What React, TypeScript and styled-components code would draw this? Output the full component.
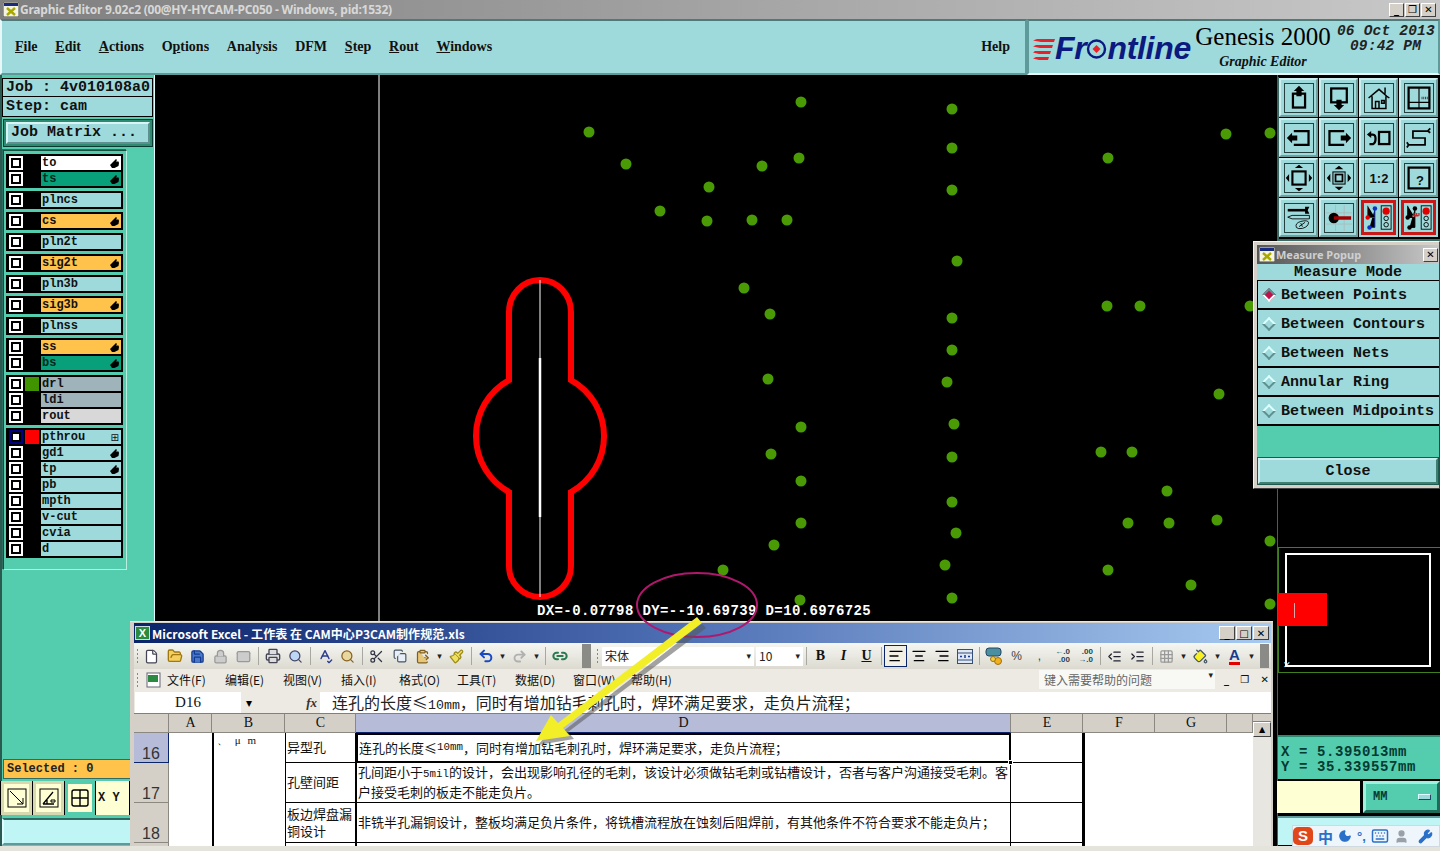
import React from 'react'
import styled, { createGlobalStyle } from 'styled-components'
import {
  AlignCenter, AlignLeft, AlignRight, ClipboardPaste, Copy, File, FolderOpen, Grid3x3, IndentDecrease,
  IndentIncrease, Keyboard, Link2, Lock, Mail, Moon, PaintBucket, Paintbrush, Printer, Redo2, Save,
  Scissors, Search, SpellCheck, Undo2, User, Wrench,
} from 'lucide-react'

const AQUA = '#9edadb'
const TEAL = '#54cdae'
const MONO = `"Liberation Mono", monospace`
const SERIF = `"Liberation Serif", serif`
const CJK = `"Noto Sans CJK SC", sans-serif`

const GlobalStyle = createGlobalStyle`
  html, body { margin: 0; padding: 0; background: #000; overflow: hidden; }
  * { box-sizing: border-box; }
`

const DOTS = [
  [801, 102], [952, 109], [589, 132], [1226, 134], [1270, 133], [952, 148], [799, 158], [1108, 158], [626, 164],
  [762, 166], [709, 187], [952, 190], [660, 211], [707, 221], [752, 220], [787, 220], [957, 261], [744, 288],
  [1107, 306], [1140, 306], [1250, 306], [770, 314], [952, 318], [952, 350], [768, 379], [947, 382], [1219, 394],
  [801, 427], [954, 424], [771, 454], [952, 457], [1101, 452], [1132, 452], [801, 481], [1167, 491], [952, 502],
  [801, 523], [1128, 523], [1169, 523], [1217, 520], [956, 533], [774, 545], [1270, 541], [723, 570], [945, 565],
  [1108, 570], [1191, 585], [952, 598], [800, 600], [1270, 604],
]

type LayerRow = { name: string; tone?: string; hand?: boolean; swatch?: string; active?: boolean; grid?: boolean }

const LAYER_GROUPS: LayerRow[][] = [
  [{ name: 'to', tone: '#fff', hand: true }, { name: 'ts', tone: '#07a07a', hand: true }],
  [{ name: 'plncs' }],
  [{ name: 'cs', tone: '#ffc24a', hand: true }],
  [{ name: 'pln2t' }],
  [{ name: 'sig2t', tone: '#ffc24a', hand: true }],
  [{ name: 'pln3b' }],
  [{ name: 'sig3b', tone: '#ffc24a', hand: true }],
  [{ name: 'plnss' }],
  [{ name: 'ss', tone: '#ffc24a', hand: true }, { name: 'bs', tone: '#07a07a', hand: true }],
  [{ name: 'drl', tone: '#9fb3bb', swatch: '#3f9400' }, { name: 'ldi', tone: '#9fb3bb' }, { name: 'rout', tone: '#d8d8d8' }],
  [
    { name: 'pthrou', swatch: '#ff0000', active: true, grid: true },
    { name: 'gd1', hand: true },
    { name: 'tp', hand: true },
    { name: 'pb' },
    { name: 'mpth' },
    { name: 'v-cut' },
    { name: 'cvia' },
    { name: 'd' },
  ],
]

const MENU = [
  ['', 'F', 'ile'], ['', 'E', 'dit'], ['', 'A', 'ctions'], ['O', 'p', 'tions'], ['Analysis', '', ''],
  ['DFM', '', ''], ['', 'S', 'tep'], ['', 'R', 'out'], ['', 'W', 'indows'],
]

const MEASURE_MODES = ['Between Points', 'Between Contours', 'Between Nets', 'Annular Ring', 'Between Midpoints']

const EXCEL_MENU = ['文件(F)', '编辑(E)', '视图(V)', '插入(I)', '格式(O)', '工具(T)', '数据(D)', '窗口(W)', '帮助(H)']

const AppIcon = () => (
  <svg width="16" height="15" viewBox="0 0 16 15">
    <rect width="16" height="15" fill="#f4f4e0" stroke="#444" />
    <rect x="1" y="1" width="14" height="3" fill="#1a2a80" />
    <path d="M4 6l8 7M12 6l-8 7" stroke="#a8a800" strokeWidth="2.4" />
  </svg>
)

const Hand = () => (
  <svg width="9" height="9" viewBox="0 0 9 9">
    <path d="M0 6l3-3 3-3 1 1-1 1.500h2.500L9 4l-.5 3-4 2H2z" fill="#000" />
  </svg>
)

const ToolIcon = ({ n }: { n: number }) => {
  const s = { fill: 'none', stroke: '#000', strokeWidth: 2.6 }
  const tip = { fill: '#000' }
  switch (n) {
    case 0:
      return <svg viewBox="0 0 30 30"><rect x="8" y="10" width="14" height="16" {...s} /><path d="M15 1l6 6h-3v6h-6V7H9z" {...tip} /></svg>
    case 1:
      return <svg viewBox="0 0 30 30"><rect x="6" y="4" width="18" height="16" {...s} /><path d="M15 29l-6-6h3v-6h6v6h3z" {...tip} /></svg>
    case 2:
      return <svg viewBox="0 0 30 30"><path d="M3 15L15 5l9 8M22 3v7M27 15l-3-2M7 13v14h16V13M11 27v-8h4v8M18 18h3v3h-3z" {...s} strokeWidth={1.7} /></svg>
    case 3:
      return <svg viewBox="0 0 30 30"><rect x="3" y="3" width="24" height="24" {...s} /><path d="M15 3v24M3 20h24" {...s} strokeWidth={1.3} /><path d="M18 15h7" stroke="#333" strokeDasharray="1 1" strokeWidth="3" /></svg>
    case 4:
      return <svg viewBox="0 0 30 30"><path d="M9 7h17v16H9" {...s} /><path d="M1 15l6-6v3h6v6H7v3z" {...tip} /></svg>
    case 5:
      return <svg viewBox="0 0 30 30"><path d="M21 7H4v16h17" {...s} /><path d="M29 15l-6-6v3h-6v6h6v3z" {...tip} /></svg>
    case 6:
      return <svg viewBox="0 0 30 30"><rect x="15" y="8" width="12" height="14" {...s} /><path d="M5 11h3q3 0 3 5t-3 6H4" {...s} /><path d="M1 11l5-4v8z" {...tip} /></svg>
    case 7:
      return <svg viewBox="0 0 30 30"><path d="M25 7H8v8h14v8H3M25 7l3-3M25 7l3 2M3 23l-2-3M3 23l-2 3" {...s} strokeWidth={2} /></svg>
    case 8:
      return <svg viewBox="0 0 34 34"><rect x="9" y="9" width="16" height="16" {...s} /><path d="M17 1l5 4H12zM17 33l5-4H12zM1 17l4-5v10zM33 17l-4-5v10z" {...tip} /></svg>
    case 9:
      return <svg viewBox="0 0 30 30"><rect x="11" y="11" width="8" height="8" {...s} strokeWidth={2} /><rect x="8" y="8" width="14" height="14" {...s} strokeWidth={1.2} /><path d="M15 1l5 4H10zM15 29l5-4H10zM1 15l4-5v10zM29 15l-4-5v10z" {...tip} /></svg>
    case 10:
      return <svg viewBox="0 0 30 30"><ToolLabel x="15" y="21">1:2</ToolLabel></svg>
    case 11:
      return <svg viewBox="0 0 30 30"><rect x="3" y="3" width="24" height="24" {...s} /><ToolLabel x="16" y="23" fontSize="17">?</ToolLabel></svg>
    case 12:
      return <svg viewBox="0 0 30 30"><path d="M2 6h22" {...s} strokeWidth={3} /><path d="M22 2h5l-2 4 2 4h-5z" {...tip} /><path d="M2 14l5-2h20v4H7z" fill="none" stroke="#000" /><path d="M12 26q-2-5 5-7 8-2 9 1 0 5-7 7-5 1-7-1zM15 25l7-5M17 21l2 4" fill="none" stroke="#000" /></svg>
    case 13:
      return <svg viewBox="0 0 30 30"><path d="M11 0v30M21 0v30M0 9h30M0 22h30" stroke="#a9bcbc" /><circle cx="9" cy="15" r="6" fill="#000" /><rect x="9" y="13" width="20" height="4" fill="#a00000" /></svg>
    case 14:
      return <svg viewBox="0 0 30 30"><rect x="18" y="2" width="11" height="26" fill="none" stroke="#000" /><circle cx="23.500" cy="8" r="4" fill="#e00000" /><circle cx="23.500" cy="16" r="2.500" fill="none" stroke="#000" /><circle cx="23.500" cy="23" r="2.500" fill="none" stroke="#000" /><path d="M11 5v21H5M11 15H3" stroke="#1030c0" /><path d="M3 2v13h8" stroke="#e00000" /><circle cx="11" cy="5" r="2.500" fill="#1030c0" /><circle cx="5" cy="26" r="2.500" fill="#1030c0" /><circle cx="3" cy="15" r="2.500" fill="#e00000" /></svg>
    default:
      return <svg viewBox="0 0 30 30"><rect x="18" y="2" width="11" height="26" fill="none" stroke="#000" /><circle cx="23.500" cy="8" r="4" fill="#e00000" /><circle cx="23.500" cy="16" r="2.500" fill="none" stroke="#000" /><circle cx="23.500" cy="23" r="2.500" fill="none" stroke="#000" /><path d="M11 5v21H5M3 2v13h8" stroke="#000" /><path d="M8 13h7M10 10v3M13 10v3M15.500 10v3" stroke="#d02020" strokeWidth="1.500" /><circle cx="11" cy="5" r="2.500" fill="#000" /><circle cx="5" cy="26" r="2.500" fill="#000" /><circle cx="3" cy="15" r="2.500" fill="#000" /></svg>
  }
}

const Arrow = () => <ToolArrow>▾</ToolArrow>

const RuleText = () => (
  <>
    连孔的长度≤<Half>10mm</Half>，同时有增加钻毛刺孔时，焊环满足要求，走负片流程；
  </>
)

const GridRow = ({ head, on, label, children }: { head: string; on?: boolean; label?: string; children?: React.ReactNode }) => (
  <>
    <RowHead $on={on}>{head}</RowHead>
    <Cell />
    <Cell $thick />
    <Cell $grid $left>{label}</Cell>
    {children}
    <Cell $grid />
    <Cell $thick />
    <Cell />
    <Cell />
  </>
)

export default function App() {
  return (
    <Screen>
      <GlobalStyle />
      <TitleBar>
        <AppIcon />
        <TitleText>Graphic Editor 9.02c2 (00@HY-HYCAM-PC050 - Windows, pid:1532)</TitleText>
        <WinButtons>
          <WinButton>_</WinButton>
          <WinButton>❐</WinButton>
          <WinButton>✕</WinButton>
        </WinButtons>
      </TitleBar>

      <TopBar>
        <MenuBar>
          {MENU.map(([before, key, after]) => (
            <MenuItem key={before + key + after}>
              {before}
              {key && <u>{key}</u>}
              {after}
            </MenuItem>
          ))}
          <HelpItem>Help</HelpItem>
        </MenuBar>
        <Brand>
          <Logo>
            <svg width="22" height="24" viewBox="0 0 22 24">
              <path d="M4 2h18l-1 3H8L0 3.500zM3 8h17l-1 3H7L0 9.500zM2 14h16l-1 3H6L0 15.500zM3 20h13l-1 3H6L0 21.500z" fill="#e8202a" />
            </svg>
            <LogoText>
              Fr
              <svg width="21" height="22" viewBox="0 0 21 22">
                <circle cx="10.5" cy="11" r="8.5" fill="none" stroke="#0a1a80" strokeWidth="2.4" />
                <path d="M10.5 7l4 4-4 4-4-4z" fill="#e8202a" />
              </svg>
              ntline
            </LogoText>
          </Logo>
          <BrandTitles>
            <Genesis>Genesis 2000</Genesis>
            <BrandSub>Graphic Editor</BrandSub>
          </BrandTitles>
          <DateBlock>
            <div>06 Oct 2013</div>
            <DateTime>09:42 PM</DateTime>
          </DateBlock>
        </Brand>
      </TopBar>

      <Main>
        <LeftPanel>
          <JobRow>Job : 4v010108a0</JobRow>
          <StepRow>Step: cam</StepRow>
          <MatrixFrame>
            <MatrixButton>Job Matrix ...</MatrixButton>
          </MatrixFrame>
          <LayerPanel>
            {LAYER_GROUPS.map((group) => (
              <LayerGroup key={group[0].name}>
                {group.map((row) => (
                  <LayerItem key={row.name}>
                    <LayerCheck $active={row.active} />
                    <LayerSwatch $color={row.swatch} />
                    <LayerLabel $tone={row.tone ?? AQUA} $dark={row.tone === '#07a07a'}>
                      {row.name}
                      {row.hand && <LabelMark><Hand /></LabelMark>}
                      {row.grid && <LabelMark>⊞</LabelMark>}
                    </LayerLabel>
                  </LayerItem>
                ))}
              </LayerGroup>
            ))}
          </LayerPanel>
          <SelectedBar>Selected : 0</SelectedBar>
          <SnapRow>
            <SnapButton>
              <svg viewBox="0 0 20 20"><rect x="1" y="1" width="18" height="18" fill="none" stroke="#000" /><path d="M3 3l13 13M16 10v6h-6" fill="none" stroke="#000" /></svg>
            </SnapButton>
            <SnapButton>
              <svg viewBox="0 0 20 20"><rect x="1" y="1" width="18" height="18" fill="none" stroke="#000" /><path d="M4 16L14 4M4 16h11M8 16v-4" fill="none" stroke="#000" strokeWidth="1.3" /><path d="M12 12h4v2h-4z" fill="none" stroke="#000" /></svg>
            </SnapButton>
            <SnapButton $on>
              <svg viewBox="0 0 20 20"><rect x="2" y="2" width="16" height="16" rx="2" fill="none" stroke="#000" strokeWidth="1.4" /><path d="M10 2v16M2 10h16" stroke="#000" strokeWidth="1.4" /></svg>
            </SnapButton>
            <SnapLabel>X Y</SnapLabel>
          </SnapRow>
          <CommandInput />
        </LeftPanel>

        <Canvas>
          <CanvasArt viewBox="155 75 1122 771">
            <line x1="379" y1="75" x2="379" y2="621" stroke="#fff" />
            {DOTS.map(([cx, cy]) => (
              <circle key={`${cx}-${cy}`} cx={cx} cy={cy} r="5.5" fill="#4a9a06" />
            ))}
            <path
              d="M509 312A31 32 0 0 1 571 312V380A64 64 0 0 1 571 492V566A31 31 0 0 1 509 566V492A64 64 0 0 1 509 380Z"
              fill="none"
              stroke="#ff0000"
              strokeWidth="6"
            />
            <line x1="540" y1="280" x2="540" y2="597" stroke="#fff" />
            <line x1="540" y1="358" x2="540" y2="517" stroke="#fff" strokeWidth="2.5" />
          </CanvasArt>
          <MeasureText>DX=-0.07798 DY=--10.69739 D=10.6976725</MeasureText>
        </Canvas>

        <RightPanel>
          <ToolGrid>
            {Array.from({ length: 16 }, (_, i) => (
              <ToolButton key={i} $alert={i >= 14}>
                <ToolFrame $wide={i === 8} $alert={i >= 14}>
                  <ToolIcon n={i} />
                </ToolFrame>
              </ToolButton>
            ))}
          </ToolGrid>
          <OverviewArea>
            <OverviewFrame>
              <OverviewBoard />
              <OverviewStock>
                <OverviewMark />
              </OverviewStock>
              <OverviewOrigin>✕</OverviewOrigin>
            </OverviewFrame>
          </OverviewArea>
          <CoordBox>
            <div>X = 5.395013mm</div>
            <div>Y = 35.339557mm</div>
          </CoordBox>
          <UnitRow>
            <UnitField />
            <UnitButton>
              MM
              <UnitKnob />
            </UnitButton>
          </UnitRow>
          <StatusStrip />
        </RightPanel>
      </Main>
      <BottomEdge />

      <MeasurePopup>
        <PopupTitle>
          <AppIcon />
          <PopupTitleText>Measure Popup</PopupTitleText>
          <PopupClose>✕</PopupClose>
        </PopupTitle>
        <PopupHeading>Measure Mode</PopupHeading>
        <ModeList>
          {MEASURE_MODES.map((mode, i) => (
            <ModeRow key={mode}>
              <ModeDiamond $on={i === 0} />
              {mode}
            </ModeRow>
          ))}
        </ModeList>
        <PopupFooter>
          <CloseButton>Close</CloseButton>
        </PopupFooter>
      </MeasurePopup>

      <ExcelWindow>
        <ExcelTitle>
          <ExcelLogo>X</ExcelLogo>
          <span>Microsoft Excel - 工作表 在 CAM中心P3CAM制作规范.xls</span>
          <ExcelControls>
            <ExcelControl>_</ExcelControl>
            <ExcelControl>□</ExcelControl>
            <ExcelControl>✕</ExcelControl>
          </ExcelControls>
        </ExcelTitle>

        <ExcelToolbar>
          <Grip />
          <Tool><File size={15} color="#445" fill="#fff" /></Tool>
          <Tool><FolderOpen size={16} color="#a07810" fill="#f4cf60" /></Tool>
          <Tool><Save size={15} color="#123a90" fill="#4a78c8" /></Tool>
          <Tool><Lock size={15} color="#999" fill="#ccc" /></Tool>
          <Tool><Mail size={15} color="#999" fill="#ccc" /></Tool>
          <ToolSep />
          <Tool><Printer size={16} color="#445" fill="#ddd" /></Tool>
          <Tool><Search size={15} color="#446" fill="#bcd8f4" /></Tool>
          <ToolSep />
          <Tool><SpellCheck size={16} color="#2a3a90" /></Tool>
          <Tool><Search size={15} color="#886020" fill="#e8d8a0" /></Tool>
          <ToolSep />
          <Tool><Scissors size={15} color="#334" /></Tool>
          <Tool><Copy size={14} color="#456" fill="#e8eef8" /></Tool>
          <Tool><ClipboardPaste size={15} color="#806020" fill="#e8c878" /></Tool>
          <Arrow />
          <Tool><Paintbrush size={15} color="#9a8a20" fill="#f0e060" /></Tool>
          <ToolSep />
          <Tool><Undo2 size={16} color="#1a4ac0" strokeWidth={3} /></Tool>
          <Arrow />
          <Tool><Redo2 size={15} color="#b0b0b0" strokeWidth={3} /></Tool>
          <Arrow />
          <ToolSep />
          <Tool><Link2 size={16} color="#2a7a50" strokeWidth={3} /></Tool>
          <DoubleGrip />
          <Grip />
          <FontBox $width={152}>宋体<BoxArrow>▾</BoxArrow></FontBox>
          <FontBox $width={47}>10<BoxArrow>▾</BoxArrow></FontBox>
          <ToolSep />
          <FormatTool>B</FormatTool>
          <FormatTool $italic>I</FormatTool>
          <FormatTool $underline>U</FormatTool>
          <ToolSep />
          <Tool $active><AlignLeft size={16} color="#000" /></Tool>
          <Tool><AlignCenter size={16} color="#000" /></Tool>
          <Tool><AlignRight size={16} color="#000" /></Tool>
          <Tool>
            <svg width="16" height="15" viewBox="0 0 16 15">
              <rect x=".5" y=".5" width="15" height="14" fill="#dfe8f4" stroke="#34507a" />
              <path d="M.5 4h15M.5 11h15" stroke="#34507a" />
              <path d="M3 7.500h2M11 7.500h2M8 6v3" stroke="#1a3a90" strokeWidth="1.5" />
            </svg>
          </Tool>
          <ToolSep />
          <Tool>
            <svg width="18" height="18" viewBox="0 0 18 18">
              <rect x="1" y="1" width="15" height="8" rx="3" fill="#4a90a0" stroke="#246" />
              <circle cx="13" cy="14" r="3.500" fill="#f0b020" stroke="#a07010" />
              <circle cx="8" cy="12" r="2.500" fill="#f0d040" stroke="#a07010" />
            </svg>
          </Tool>
          <Tool><FormatGlyph>%</FormatGlyph></Tool>
          <Tool><FormatGlyph>,</FormatGlyph></Tool>
          <Tool><DecimalGlyph><span>←.0</span><span>.00</span></DecimalGlyph></Tool>
          <Tool><DecimalGlyph><span>.00</span><span>→.0</span></DecimalGlyph></Tool>
          <ToolSep />
          <Tool><IndentDecrease size={15} color="#223" /></Tool>
          <Tool><IndentIncrease size={15} color="#223" /></Tool>
          <ToolSep />
          <Tool><Grid3x3 size={15} color="#999" /></Tool>
          <Arrow />
          <Tool><PaintBucket size={15} color="#456" fill="#f8f020" /></Tool>
          <Arrow />
          <Tool><FontColorGlyph>A</FontColorGlyph></Tool>
          <Arrow />
          <TailGrip />
        </ExcelToolbar>

        <ExcelMenu>
          <Grip />
          <ExcelMenuLogo>
            <svg width="16" height="16" viewBox="0 0 16 16">
              <rect x="1" y="1" width="13" height="14" fill="#fff" stroke="#667" />
              <rect x="2" y="3" width="10" height="7" fill="#2a8a40" />
            </svg>
          </ExcelMenuLogo>
          {EXCEL_MENU.map((item) => (
            <ExcelMenuItem key={item}>{item}</ExcelMenuItem>
          ))}
          <HelpBox>键入需要帮助的问题<BoxArrow>▾</BoxArrow></HelpBox>
          <MenuControls>
            <span>_</span>
            <span>❐</span>
            <span>✕</span>
          </MenuControls>
        </ExcelMenu>

        <FormulaBar>
          <NameBox>D16</NameBox>
          <NameArrow>▾</NameArrow>
          <FxMark>fx</FxMark>
          <FormulaText><RuleText /></FormulaText>
        </FormulaBar>

        <SheetArea>
          <Sheet>
            <ColHead />
            {['A', 'B', 'C', 'D', 'E', 'F', 'G', ''].map((c) => (
              <ColHead key={c || 'blank'} $on={c === 'D'}>{c}</ColHead>
            ))}

            <RowHead $on>16</RowHead>
            <Cell />
            <Cell $thick>
              <SmallNote>、 μ m</SmallNote>
            </Cell>
            <Cell $grid $left>异型孔</Cell>
            <SelectedCell>
              <RuleText />
              <FillHandle />
            </SelectedCell>
            <Cell $grid />
            <Cell $thick />
            <Cell />
            <Cell />

            <GridRow head="17" label="孔壁间距">
              <Cell $grid $left>
                <CellLines>
                  <div>孔间距小于<Half>5mil</Half>的设计，会出现影响孔径的毛刺，该设计必须做钻毛刺或钻槽设计，否者与客户沟通接受毛刺。客</div>
                  <div>户接受毛刺的板走不能走负片。</div>
                </CellLines>
              </Cell>
            </GridRow>

            <GridRow head="18" label="板边焊盘漏铜设计">
              <Cell $grid $left>
                非铣半孔漏铜设计，整板均满足负片条件，将铣槽流程放在蚀刻后阻焊前，有其他条件不符合要求不能走负片；
              </Cell>
            </GridRow>

            <GridRow head="">
              <Cell $grid $left />
            </GridRow>
          </Sheet>
          <ScrollBar>
            <ScrollSplit />
            <ScrollUp>▲</ScrollUp>
          </ScrollBar>
        </SheetArea>
      </ExcelWindow>

      <Annotation viewBox="0 0 1440 851">
        <ellipse cx="697" cy="605" rx="60" ry="32" fill="none" stroke="#b0186e" strokeWidth="2" />
        <path d="M700 622L560 730L554 722L536 743L572 737L566 730L704 626Z" fill="#555" opacity=".55" transform="translate(2 2)" />
        <path d="M697 617L558 723L551 715L536 741L570 736L563 728L702 623Z" fill="#f2ee28" />
      </Annotation>

      <Tray>
        <TraySogou>S</TraySogou>
        <TrayZh>中</TrayZh>
        <Moon size={14} color="#2a6fc8" fill="#2a6fc8" />
        <TrayPunct>°,</TrayPunct>
        <Keyboard size={18} color="#2a6fc8" />
        <User size={15} color="#9aa0a8" fill="#9aa0a8" />
        <TrayWrench><Wrench size={15} color="#2a6fc8" fill="#2a6fc8" /></TrayWrench>
      </Tray>
    </Screen>
  )
}

const Screen = styled.div`
  position: relative;
  width: 1440px;
  height: 851px;
  overflow: hidden;
  display: flex;
  flex-direction: column;
  background: #000;
`

const TitleBar = styled.div`
  height: 19px;
  flex: none;
  display: flex;
  align-items: center;
  padding-left: 3px;
  background: linear-gradient(90deg, #7f7f7f, #c8c8c8);
`

const TitleText = styled.span`
  margin-left: 1px;
  font: bold 12px "Noto Sans", sans-serif;
  letter-spacing: -0.22px;
  color: #d8d8d8;
  white-space: nowrap;
`

const WinButtons = styled.div`
  margin-left: auto;
  margin-right: 4px;
  display: flex;
  gap: 1px;
`

const WinButton = styled.div`
  width: 15px;
  height: 14px;
  display: flex;
  align-items: center;
  justify-content: center;
  background: #d4d0c8;
  border: 1px solid;
  border-color: #fff #404040 #404040 #fff;
  font: bold 10px "DejaVu Sans", sans-serif;
  color: #000;
`

const TopBar = styled.div`
  height: 56px;
  flex: none;
  display: flex;
  background: #f0f8f8;
`

const MenuBar = styled.div`
  width: 1027px;
  display: flex;
  align-items: center;
  gap: 17.75px;
  padding: 0 15px 0 13px;
  background: ${AQUA};
  border: 2px solid;
  border-color: #4f7a7a #5f9a9a #5f9a9a #e8f8f8;
`

const MenuItem = styled.span`
  font: bold 14px ${SERIF};
  color: #111;
`

const HelpItem = styled(MenuItem)`
  margin-left: auto;
`

const Brand = styled.div`
  flex: 1;
  display: flex;
  align-items: flex-start;
  padding: 2px 0 0 4px;
  background: ${AQUA};
  border: 2px solid;
  border-color: #4f7a7a #5f9a9a #e8f8f8 #5f9a9a;
`

const Logo = styled.div`
  display: flex;
  align-items: center;
  margin-top: 7px;
`

const LogoText = styled.div`
  display: flex;
  align-items: center;
  font: italic bold 32px "Liberation Sans", sans-serif;
  letter-spacing: -0.3px;
  color: #0a1a80;
`

const BrandTitles = styled.div`
  margin-left: 3px;
  width: 138px;
  display: flex;
  flex-direction: column;
  align-items: center;
`

const Genesis = styled.div`
  font: 25px/28px ${SERIF};
  color: #000;
  white-space: nowrap;
`

const BrandSub = styled.div`
  margin-top: 3px;
  font: italic bold 14px ${SERIF};
  color: #111;
`

const DateBlock = styled.div`
  margin-left: 5px;
  padding-top: 1px;
  font: italic bold 14.5px/15px ${MONO};
  letter-spacing: 0.2px;
  color: #222;
  white-space: nowrap;
`

const DateTime = styled.div`
  margin-left: 13px;
`

const Main = styled.div`
  flex: 1;
  min-height: 0;
  display: flex;
`

const LeftPanel = styled.div`
  width: 155px;
  flex: none;
  display: flex;
  flex-direction: column;
  padding-top: 3px;
  background: linear-gradient(90deg, #2a5a50 2px, ${TEAL} 2px);
  border-right: 1px solid #dff;
`

const JobRow = styled.div`
  height: 19px;
  margin: 0 1px 0 2px;
  padding-left: 3px;
  background: ${AQUA};
  border: 1px solid #000;
  font: bold 15px/18px ${MONO};
  color: #111;
  white-space: nowrap;
`

const StepRow = styled(JobRow)`
  height: 20px;
  border-top: 0;
  line-height: 20px;
`

const MatrixFrame = styled.div`
  margin: 2px 1px 0 3px;
  padding: 2px;
  height: 28px;
  background: #2f8a72;
  border: 1px solid #0a3a30;
`

const MatrixButton = styled.div`
  height: 22px;
  padding-left: 3px;
  background: ${AQUA};
  border: 2px solid;
  border-color: #d8f4f4 #5f8f8f #5f8f8f #d8f4f4;
  font: bold 15px/18px ${MONO};
  color: #111;
`

const LayerPanel = styled.div`
  width: 124px;
  margin: 3px 0 0 3px;
  padding: 3px 3px 11px 2px;
  display: flex;
  flex-direction: column;
  gap: 3px;
  background: ${TEAL};
  border: 1px solid;
  border-color: #16503f #b8efe0 #b8efe0 #16503f;
  box-shadow: -1px -1px 0 #2f6b60;
`

const LayerGroup = styled.div`
  padding: 1px 2px 1px 2px;
  background: #000;
`

const LayerItem = styled.div`
  height: 16px;
  display: flex;
  align-items: center;
`

// hollow square: white centre, black ring, outer ring (navy on the active layer)
const LayerCheck = styled.div<{ $active?: boolean }>`
  width: 6px;
  height: 6px;
  flex: none;
  margin: 0 4px 0 5px;
  background: #fff;
  box-shadow: 0 0 0 2px #000, 0 0 0 4px ${({ $active }) => ($active ? '#000080' : '#fff')};
`

const LayerSwatch = styled.div<{ $color?: string }>`
  width: 14px;
  height: 14px;
  flex: none;
  margin: 0 2px;
  background: ${({ $color }) => $color ?? '#000'};
`

const LayerLabel = styled.div<{ $tone: string; $dark?: boolean }>`
  flex: 1;
  height: 14px;
  padding-left: 1px;
  display: flex;
  align-items: center;
  justify-content: space-between;
  background: ${({ $tone }) => $tone};
  font: bold 12px/14px ${MONO};
  color: ${({ $dark }) => ($dark ? '#02281e' : '#111')};
`

const LabelMark = styled.span`
  display: flex;
  align-items: center;
  padding-right: 2px;
  font: 10px "DejaVu Sans", sans-serif;
`

const SelectedBar = styled.div`
  margin: auto 0 0 3px;
  height: 20px;
  padding-left: 3px;
  background: #ffc24a;
  border: 1px solid #2f6b60;
  font: bold 12px/18px ${MONO};
  color: #222;
`

const SnapRow = styled.div`
  height: 34px;
  margin-top: 2px;
  padding: 0 25px 0 1px;
  display: flex;
  align-items: stretch;
  gap: 1px;
  background: #000;
`

const SnapButton = styled.div<{ $on?: boolean }>`
  width: ${({ $on }) => ($on ? '30px' : '31px')};
  flex: none;
  display: flex;
  align-items: center;
  justify-content: center;
  background: #ffffd4;
  border: 3px solid ${({ $on }) => ($on ? TEAL : '#d8d8b0')};

  svg {
    width: 20px;
    height: 20px;
  }
`

const SnapLabel = styled.div`
  flex: 1;
  padding-left: 2px;
  background: #ffffd4;
  font: bold 12px/34px ${MONO};
  color: #111;
  white-space: nowrap;
`

const CommandInput = styled.div`
  height: 27px;
  margin: 3px 0 1px 2px;
  background: #bff5f5;
  border: 2px solid;
  border-color: #2f6b60 #dff #5f9a9a #dff;
`

const Canvas = styled.div`
  position: relative;
  flex: 1;
  background: #000;
`

const CanvasArt = styled.svg`
  display: block;
  width: 100%;
  height: 100%;
`

const MeasureText = styled.div`
  position: absolute;
  left: 382px;
  top: 528px;
  font: bold 14px/16px ${MONO};
  letter-spacing: 0.39px;
  color: #fff;
  white-space: nowrap;
`

const RightPanel = styled.div`
  width: 163px;
  flex: none;
  display: flex;
  flex-direction: column;
  background: #000;
  border-left: 1px solid #2f6b60;
`

const ToolGrid = styled.div`
  margin-top: 2px;
  padding: 1px 0;
  display: grid;
  grid-template-columns: repeat(4, 40px);
  grid-auto-rows: 40px;
  background: #000;
  border: 1px solid #3a6a64;
  border-width: 0 0 3px 1px;
`

const ToolButton = styled.div<{ $alert?: boolean }>`
  margin: 0 1px 1px 0;
  display: flex;
  align-items: center;
  justify-content: center;
  background: ${AQUA};
  border: 2px solid;
  border-color: ${({ $alert }) => ($alert ? AQUA : '#cdeeee #6f9f9f #6f9f9f #cdeeee')};
`

const ToolFrame = styled.div<{ $wide?: boolean; $alert?: boolean }>`
  width: ${({ $alert }) => ($alert ? '35px' : '30px')};
  height: ${({ $alert }) => ($alert ? '35px' : '30px')};
  padding: ${({ $wide }) => ($wide ? '0' : '1px')};
  background: ${AQUA};
  border: ${({ $alert }) => ($alert ? '3px solid #c81818' : '1px solid #24403f')};

  svg {
    display: block;
    width: 100%;
    height: 100%;
  }
`

const ToolLabel = styled.text`
  font: bold 15px "Liberation Sans", sans-serif;
  text-anchor: middle;
  fill: #111;
`

const OverviewArea = styled.div`
  flex: 1;
  position: relative;
  min-height: 0;
`

const OverviewFrame = styled.div`
  position: absolute;
  left: 0;
  right: 0;
  top: 305px;
  height: 126px;
  border: 1px solid #3f7f1f;
  border-right: 0;
`

const OverviewBoard = styled.div`
  position: absolute;
  left: 6px;
  top: 5px;
  width: 146px;
  height: 114px;
  border: 2px solid #fff;
`

const OverviewStock = styled.div`
  position: absolute;
  left: -1px;
  top: 45px;
  width: 49px;
  height: 33px;
  background: #ff0000;
`

const OverviewMark = styled.div`
  position: absolute;
  left: 16px;
  top: 10px;
  width: 1px;
  height: 15px;
  background: #d8a8a8;
`

const OverviewOrigin = styled.span`
  position: absolute;
  left: 4px;
  top: 112px;
  color: #fff;
  font: 9px "DejaVu Sans", sans-serif;
`

const CoordBox = styled.div`
  height: 44px;
  padding: 8px 0 0 3px;
  background: ${TEAL};
  border-top: 2px solid #2f8a72;
  font: bold 14px/15px ${MONO};
  letter-spacing: 0.6px;
  color: #043a30;
  white-space: nowrap;
`

const UnitRow = styled.div`
  height: 32px;
  margin: 2px 0 0 -1px;
  display: flex;
  gap: 3px;
`

const UnitField = styled.div`
  width: 83px;
  background: #ffffd4;
`

const UnitButton = styled.div`
  flex: 1;
  display: flex;
  align-items: center;
  justify-content: space-between;
  padding: 0 6px 0 7px;
  background: ${TEAL};
  border: 3px solid;
  border-color: #9ff0dc #1f6a58 #1f6a58 #9ff0dc;
  font: bold 12px ${MONO};
  color: #043a30;
`

const UnitKnob = styled.div`
  width: 13px;
  height: 6px;
  background: ${AQUA};
  border: 1px solid;
  border-color: #dff #246 #246 #dff;
`

const StatusStrip = styled.div`
  height: 29px;
  margin-top: 3px;
  margin-bottom: 1px;
  background: #bff5f5;
  border-top: 2px solid #5f9a9a;
`

const BottomEdge = styled.div`
  height: 5px;
  flex: none;
  background: #e4e4dc;
`

const MeasurePopup = styled.div`
  position: absolute;
  left: 1253px;
  top: 241px;
  width: 187px;
  height: 248px;
  padding: 3px 0 3px 3px;
  display: flex;
  flex-direction: column;
  background: #d4d0c8;
  border: 1px solid;
  border-color: #f4f4f0 #404040 #404040 #f4f4f0;
`

const PopupTitle = styled.div`
  height: 19px;
  flex: none;
  display: flex;
  align-items: center;
  padding-left: 2px;
  background: linear-gradient(90deg, #555, #c8c8c8);
`

const PopupTitleText = styled.span`
  margin-left: 1px;
  font: bold 11px "Noto Sans", sans-serif;
  color: #cfcfcf;
`

const PopupClose = styled(WinButton)`
  margin-left: auto;
  margin-right: 1px;
`

const PopupHeading = styled.div`
  height: 17px;
  padding-top: 1px;
  background: ${AQUA};
  text-align: center;
  font: bold 15px/16px ${MONO};
  color: #111;
  border-bottom: 1px solid #000;
`

const ModeList = styled.div`
  display: flex;
  flex-direction: column;
  background: #000;
`

const ModeRow = styled.div`
  height: 27px;
  margin: 0 0 2px 1px;
  display: flex;
  align-items: center;
  gap: 7px;
  padding: 2px 0 0 6px;
  background: ${AQUA};
  font: bold 15px ${MONO};
  color: #111;
  white-space: nowrap;
`

const ModeDiamond = styled.span<{ $on?: boolean }>`
  width: 10px;
  height: 10px;
  flex: none;
  margin-top: -2px;
  transform: rotate(45deg);
  background: ${({ $on }) => ($on ? '#c0104a' : AQUA)};
  border: 2px solid;
  border-color: ${({ $on }) => ($on ? '#5f8f8f #fff #fff #5f8f8f' : '#dff #5f8f8f #5f8f8f #dff')};
`

const PopupFooter = styled.div`
  flex: 1;
  display: flex;
  align-items: flex-end;
  background: ${TEAL};
`

const CloseButton = styled.div`
  width: 100%;
  height: 28px;
  background: ${AQUA};
  border: 3px solid;
  border-color: #cdeeee #3f7f72 #3f7f72 #cdeeee;
  outline: 1px solid #1f5a50;
  outline-offset: -1px;
  text-align: center;
  font: bold 15px/24px ${MONO};
  color: #111;
`

const ExcelWindow = styled.div`
  position: absolute;
  left: 130px;
  top: 621px;
  width: 1143px;
  height: 225px;
  overflow: hidden;
  display: flex;
  flex-direction: column;
  padding: 1px 2px 0 4px;
  background: #d4d0c8;
  border-top: 1px solid #e8e8e0;
`

const ExcelTitle = styled.div`
  height: 20px;
  flex: none;
  display: flex;
  align-items: center;
  gap: 2px;
  padding-left: 1px;
  background: linear-gradient(90deg, #0a246a 0%, #4a6ab0 45%, #a6caf0 100%);
  font: bold 12px ${CJK};
  letter-spacing: 0.05px;
  color: #fff;
  white-space: nowrap;
`

const ExcelLogo = styled.span`
  width: 15px;
  height: 14px;
  background: #2a8a40;
  border: 1px solid #cdd;
  text-align: center;
  font: bold 11px/12px "Liberation Sans", sans-serif;
  color: #fff;
`

const ExcelControls = styled.div`
  margin-left: auto;
  margin-right: 2px;
  display: flex;
  gap: 1px;
`

const ExcelControl = styled.div`
  width: 16px;
  height: 14px;
  display: flex;
  align-items: center;
  justify-content: center;
  background: #d4d0c8;
  border: 1px solid;
  border-color: #fff #404040 #404040 #fff;
  font: bold 10px "DejaVu Sans", sans-serif;
  color: #000;
`

const ExcelToolbar = styled.div`
  height: 26px;
  flex: none;
  display: flex;
  align-items: center;
  padding-left: 2px;
  background: linear-gradient(180deg, #f6f6f2, #dcdad0);
`

const Grip = styled.span`
  width: 4px;
  height: 16px;
  flex: none;
  background-image: radial-gradient(#888 1px, transparent 1px);
  background-size: 3px 4px;
`

const Tool = styled.span<{ $active?: boolean }>`
  width: 23px;
  height: 22px;
  flex: none;
  display: flex;
  align-items: center;
  justify-content: center;
  background: ${({ $active }) => ($active ? '#f2f0e4' : 'transparent')};
  border: 1px solid ${({ $active }) => ($active ? '#0a246a' : 'transparent')};
`

const ToolArrow = styled.span`
  width: 11px;
  flex: none;
  text-align: center;
  font: 9px "DejaVu Sans", sans-serif;
  color: #222;
`

const ToolSep = styled.span`
  width: 1px;
  height: 18px;
  flex: none;
  margin: 0 2.5px;
  background: #a8a8a0;
`

const DoubleGrip = styled.span`
  width: 9px;
  height: 24px;
  flex: none;
  margin: 0 5px 0 11px;
  background: #8a8a86;
`

const TailGrip = styled(DoubleGrip)`
  margin: 0 0 0 3px;
`

const FontBox = styled.span<{ $width: number }>`
  width: ${({ $width }) => $width}px;
  height: 19px;
  flex: none;
  margin-left: 2px;
  display: flex;
  align-items: center;
  justify-content: space-between;
  padding: 0 3px;
  background: #fff;
  font: 12px/16px ${CJK};
  color: #222;
`

const BoxArrow = styled.span`
  font: 9px "DejaVu Sans", sans-serif;
  color: #222;
`

const FormatTool = styled.span<{ $italic?: boolean; $underline?: boolean }>`
  width: 23px;
  flex: none;
  text-align: center;
  font: bold 14px ${SERIF};
  font-style: ${({ $italic }) => ($italic ? 'italic' : 'normal')};
  text-decoration: ${({ $underline }) => ($underline ? 'underline' : 'none')};
  color: #111;
`

const FormatGlyph = styled.span`
  font: 12px "Liberation Sans", sans-serif;
  color: #444;
`

const DecimalGlyph = styled.span`
  display: flex;
  flex-direction: column;
  align-items: flex-end;
  font: bold 8px/8px "Liberation Sans", sans-serif;
  color: #245;
`

const FontColorGlyph = styled.span`
  font: bold 15px/14px "Liberation Sans", sans-serif;
  color: #1a3a90;
  border-bottom: 3px solid #e00000;
`

const ExcelMenu = styled.div`
  height: 23px;
  flex: none;
  display: flex;
  align-items: center;
  padding: 0 0 2px 2px;
  background: #eceae2;
`

const ExcelMenuLogo = styled.span`
  display: flex;
  width: 27px;
  justify-content: center;
`

const ExcelMenuItem = styled.span`
  width: 58px;
  flex: none;
  font: 12px ${CJK};
  color: #111;
  white-space: nowrap;
`

const HelpBox = styled.span`
  width: 176px;
  margin-left: auto;
  padding: 0 2px 0 5px;
  display: flex;
  justify-content: space-between;
  background: #f8f8f4;
  font: 12px/19px ${CJK};
  color: #666;
`

const MenuControls = styled.span`
  width: 56px;
  padding: 0 2px 0 9px;
  display: flex;
  justify-content: space-between;
  font: bold 10px "DejaVu Sans", sans-serif;
  color: #111;
`

const FormulaBar = styled.div`
  height: 21px;
  flex: none;
  display: flex;
  align-items: center;
  background: #eceae2;
`

const NameBox = styled.span`
  width: 106px;
  height: 100%;
  margin-left: 1px;
  background: #fff;
  text-align: center;
  font: 15px/21px ${SERIF};
  color: #111;
`

const NameArrow = styled.span`
  width: 16px;
  text-align: center;
  font: 12px "DejaVu Sans", sans-serif;
`

const FxMark = styled.span`
  width: 63px;
  padding-right: 3px;
  text-align: right;
  font: italic bold 13px ${SERIF};
  color: #333;
`

const FormulaText = styled.span`
  flex: 1;
  height: 100%;
  padding-left: 12px;
  background: #fff;
  font: 16px/21px ${CJK};
  color: #222;
  white-space: nowrap;
`

const Half = styled.span`
  font-family: ${MONO};
  font-size: 0.83em;
`

const SheetArea = styled.div`
  flex: 1;
  min-height: 0;
  display: flex;
  border-top: 1px solid #808080;
`

const Sheet = styled.div`
  flex: 1;
  display: grid;
  grid-template-columns: 35px 43px 73px 71px 655px 72px 72px 72px 1fr;
  grid-template-rows: 19px 30px 40px 40px 20px;
  background: #fff;
`

const ColHead = styled.div<{ $on?: boolean }>`
  padding-left: 1px;
  background: ${({ $on }) => ($on ? '#b6bcd8' : '#d4d0c8')};
  border-right: 1px solid #8a8880;
  border-bottom: 1px solid ${({ $on }) => ($on ? '#0a246a' : '#8a8880')};
  text-align: center;
  font: 14px/18px ${SERIF};
  color: #111;
`

const RowHead = styled.div<{ $on?: boolean }>`
  display: flex;
  align-items: flex-end;
  justify-content: center;
  background: ${({ $on }) => ($on ? '#b6bcd8' : '#d4d0c8')};
  border-right: 1px solid ${({ $on }) => ($on ? '#0a246a' : '#8a8880')};
  border-bottom: 1px solid ${({ $on }) => ($on ? '#0a246a' : '#8a8880')};
  font: 16px/16px "Liberation Sans", sans-serif;
  color: #333;
`

const Cell = styled.div<{ $grid?: boolean; $left?: boolean; $thick?: boolean }>`
  display: flex;
  align-items: center;
  padding: 0 0 2px 1px;
  border-bottom: ${({ $grid }) => ($grid ? '1px solid #000' : '0')};
  border-left: ${({ $left, $thick }) => ($thick ? '2px solid #000' : $left ? '1px solid #000' : '0')};
  border-right: ${({ $grid }) => ($grid ? '1px solid #000' : '0')};
  font: 13px/17px ${CJK};
  color: #111;
`

const SelectedCell = styled(Cell)`
  position: relative;
  border: 2px solid #000;
  white-space: nowrap;
`

const CellLines = styled.div`
  white-space: nowrap;
`

const FillHandle = styled.span`
  position: absolute;
  right: -4px;
  bottom: -4px;
  width: 5px;
  height: 5px;
  background: #000;
  border: 1px solid #fff;
`

const SmallNote = styled.span`
  align-self: flex-start;
  margin-left: 2px;
  font: 11px/15px "Liberation Serif", serif;
  letter-spacing: 2px;
`

const ScrollBar = styled.div`
  width: 18px;
  flex: none;
  background: #e8e6e0;
`

const ScrollSplit = styled.div`
  height: 8px;
  background: #d4d0c8;
  border-bottom: 1px solid #808080;
`

const ScrollUp = styled.div`
  height: 15px;
  background: #d4d0c8;
  border: 1px solid;
  border-color: #fff #404040 #404040 #fff;
  text-align: center;
  font: 8px/13px "DejaVu Sans", sans-serif;
  color: #000;
`

const Annotation = styled.svg`
  position: absolute;
  left: 0;
  top: 0;
  width: 1440px;
  height: 851px;
  pointer-events: none;
`

const Tray = styled.div`
  position: absolute;
  left: 1292px;
  top: 825px;
  width: 148px;
  height: 22px;
  display: flex;
  align-items: center;
  gap: 5px;
  background: #eef5fb;
  border: 1px solid #d0d8e0;
`

const TraySogou = styled.span`
  width: 20px;
  height: 18px;
  background: #e0481a;
  border-radius: 5px;
  text-align: center;
  font: bold 15px/18px "Liberation Sans", sans-serif;
  color: #fff;
`

const TrayZh = styled.span`
  font: bold 15px ${CJK};
  color: #2a6fc8;
`

const TrayPunct = styled.span`
  font: bold 13px "Liberation Sans", sans-serif;
  color: #2a6fc8;
`

const TrayWrench = styled.span`
  display: flex;
  margin-left: 4px;
`
